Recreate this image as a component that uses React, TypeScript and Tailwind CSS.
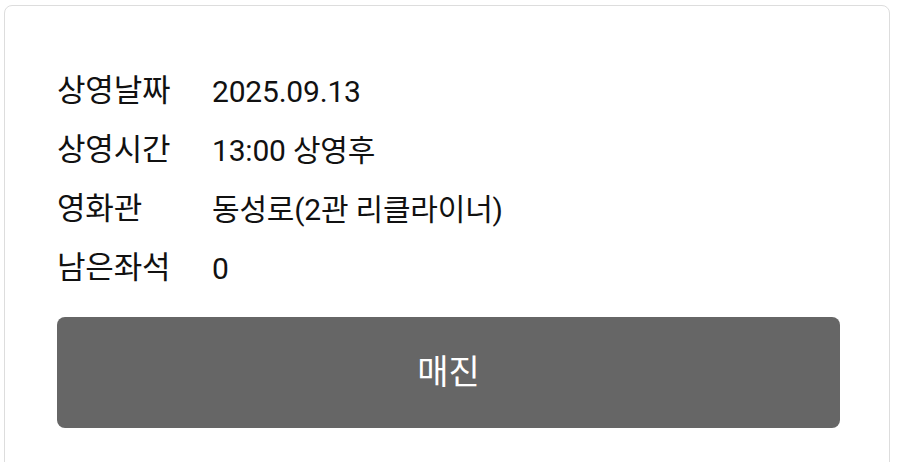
export default function App() {
  const rows = [
    { label: '상영날짜', value: '2025.09.13' },
    { label: '상영시간', value: '13:00 상영후' },
    { label: '영화관', value: '동성로(2관 리클라이너)' },
    { label: '남은좌석', value: '0' },
  ]

  return (
    <div className="h-[462px] overflow-hidden bg-white pt-[5px] pl-[4px] pr-[10px] font-['Roboto','Noto_Sans_CJK_KR',sans-serif]">
      <div className="h-[500px] rounded-lg border border-[#dddddd] pl-[52px] pr-[49px] pt-[56px]">
        <dl>
          {rows.map((row) => (
            <div key={row.label} className="flex h-[59px] items-center tracking-[-0.2px] text-[#111111]">
              <dt className="w-[155px] shrink-0 text-[31px]">{row.label}</dt>
              <dd className="text-[30px]">{row.value}</dd>
            </div>
          ))}
        </dl>
        <button
          type="button"
          disabled
          className="mt-[19px] flex h-[111px] w-full items-center justify-center rounded-lg bg-[#666666] text-[34px] text-white"
        >
          매진
        </button>
      </div>
    </div>
  )
}
